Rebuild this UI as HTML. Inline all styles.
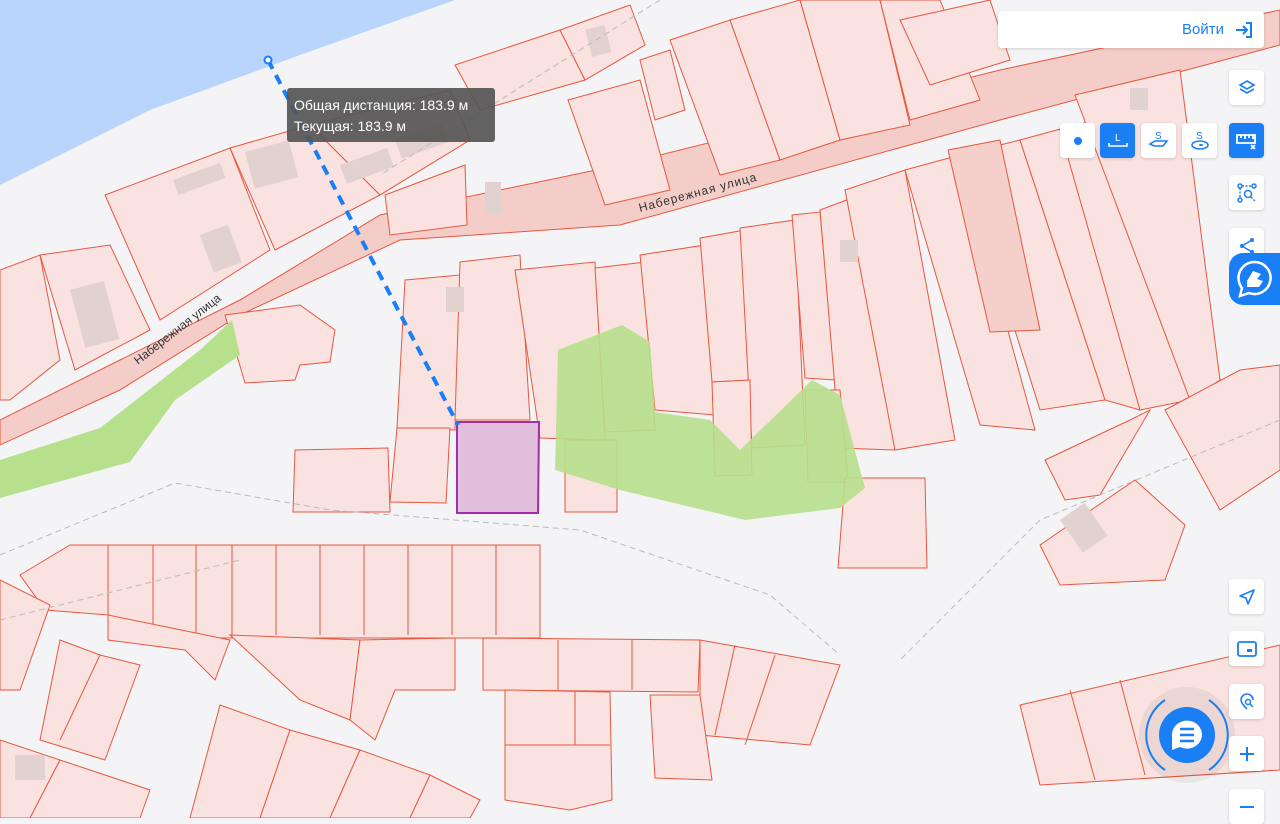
<!DOCTYPE html>
<html><head><meta charset="utf-8"><style>
html,body{margin:0;padding:0;width:1280px;height:818px;overflow:hidden;background:#f4f4f6;font-family:"Liberation Sans",sans-serif}
svg{position:absolute;left:0;top:0}
.b{position:absolute;width:35px;height:35px;background:#fff;border-radius:4px;box-shadow:0 1px 3px rgba(0,0,0,.15);display:flex;align-items:center;justify-content:center}
.bl{background:#1a7ef5}
</style></head><body>
<svg width="1280" height="818" viewBox="0 0 1280 818">
<g fill="#f9e2df" stroke="#e8573f" stroke-width="1">
<!-- water -->
<path d="M0 0H455L300 55L150 110L0 185Z" fill="#b9d5fb" stroke="none"/>
<!-- road band -->
<path d="M0 420L120 360L240 300L380 215L620 165L1000 70L1280 10V45L1000 120L620 225L400 240L240 315L120 390L0 445Z" fill="#f4cdc8"/>
<!-- north side parcels -->
<path d="M105 195L230 148L270 250L160 320Z"/>
<path d="M230 148L310 125L380 195L275 250Z"/>
<path d="M310 125L450 90L470 140L380 195Z"/>
<path d="M0 270L40 255L60 360L10 400L0 400Z"/>
<path d="M40 255L110 245L150 330L75 370Z"/>
<path d="M455 65L560 30L585 80L480 110Z"/>
<path d="M560 30L630 5L645 45L585 80Z"/>
<path d="M568 100L640 80L670 190L605 205Z"/>
<path d="M640 60L670 50L685 110L655 120Z"/>
<path d="M670 40L730 20L780 160L720 175Z"/>
<path d="M730 20L800 0L840 140L780 160Z"/>
<path d="M800 0L880 0L910 125L840 140Z"/>
<path d="M880 0L940 0L980 100L910 120Z"/>
<path d="M900 20L990 0L1010 60L930 85Z"/>
<path d="M385 195L465 165L467 225L390 235Z"/>
<!-- south of road -->
<path d="M225 315L300 305L335 330L330 362L300 365L295 380L245 383Z"/>
<path d="M405 280L460 275L455 430L397 428Z"/>
<path d="M460 262L520 255L530 420L455 420Z"/>
<path d="M515 270L595 262L605 440L540 438Z"/>
<path d="M595 268L645 262L655 430L605 432Z"/>
<path d="M640 255L705 245L715 415L655 410Z"/>
<path d="M700 238L745 230L752 380L712 382Z"/>
<path d="M740 228L795 220L805 445L752 448Z"/>
<path d="M792 215L820 212L835 380L805 378Z"/>
<path d="M820 210L860 195L895 450L840 448Z"/>
<path d="M845 190L905 170L955 440L895 450Z"/>
<path d="M905 170L960 155L1035 430L980 425Z"/>
<path d="M960 155L1020 140L1105 400L1040 410Z"/>
<path d="M1020 140L1075 125L1140 410L1105 400Z"/>
<path d="M1060 130L1130 110L1190 400L1140 410Z"/>
<path d="M1075 95L1180 70L1220 380L1190 400Z"/>
<path d="M948 150L1000 140L1040 330L990 332Z" fill="#f5cfc9"/>
<path d="M1045 460L1130 420L1150 410L1100 495L1065 500Z"/>
<path d="M1165 410L1240 370L1280 365V470L1220 510Z"/>
<path d="M1040 545L1135 480L1185 525L1165 580L1060 585Z"/>
<path d="M712 382L750 380L752 475L715 476Z"/>
<path d="M805 390L840 390L848 482L808 482Z"/>
<path d="M845 478L925 478L927 568L838 568Z"/>
<path d="M565 440L617 440L617 512L565 512Z"/>
<path d="M397 428L450 428L446 503L390 502Z"/>
<path d="M295 450L388 448L390 512L293 512Z"/>
<!-- bottom grid -->
<path d="M20 575L70 545L108 545L108 615L45 610Z"/>
<path d="M108 545H540V638H108Z"/>
<path d="M153 545V635M196 545V635M232 545V635M276 545V635M320 545V635M364 545V635M408 545V635M452 545V635M496 545V635" fill="none"/>
<path d="M0 580L50 605L20 690L0 690Z"/>
<path d="M60 640L100 655L140 665L105 760L40 740Z"/>
<path d="M100 655L60 740" fill="none"/>
<path d="M108 615L230 640L215 680L185 650L108 640Z"/>
<path d="M230 635L360 640L350 720L300 700Z"/>
<path d="M360 640L455 638L455 690L395 690L375 740L350 720Z"/>
<path d="M483 638L700 640L698 692L483 690Z"/>
<path d="M558 640V690M632 640V690" fill="none"/>
<path d="M700 640L840 665L810 745L700 735Z"/>
<path d="M735 645L715 735M775 655L745 745" fill="none"/>
<path d="M505 690L610 692L612 800L570 810L505 800Z"/>
<path d="M505 745H610M575 692V745" fill="none"/>
<path d="M650 695L700 695L712 780L655 778Z"/>
<path d="M220 705L290 730L260 818H190Z"/>
<path d="M290 730L360 750L330 818H260Z"/>
<path d="M360 750L430 775L410 818H330Z"/>
<path d="M430 775L480 800L470 818H410Z"/>
<path d="M0 740L60 760L30 818H0Z"/>
<path d="M60 760L150 790L140 818H30Z"/>
<path d="M1020 705L1280 645V770L1040 785Z"/>
<path d="M1070 690L1095 780M1120 680L1145 775" fill="none"/>
<!-- green -->
<path d="M0 460L100 428L200 350L232 320L240 355L175 400L130 462L0 498Z" fill="#b7e08d" stroke="none"/>
<path d="M558 350L622 325L650 342L655 412L710 420L740 450L812 380L840 395L865 488L840 508L745 520L620 490L555 470Z" fill="#b7e08d" stroke="none" opacity=".9"/>
<!-- buildings -->
<g fill="#e2d2cf" stroke="none">
<rect x="173" y="180" width="50" height="16" transform="rotate(-20 173 180)"/>
<rect x="245" y="152" width="45" height="38" transform="rotate(-15 245 152)"/>
<rect x="200" y="235" width="30" height="40" transform="rotate(-20 200 235)"/>
<rect x="340" y="165" width="50" height="20" transform="rotate(-20 340 165)"/>
<rect x="395" y="140" width="50" height="20" transform="rotate(-20 395 140)"/>
<rect x="70" y="290" width="35" height="60" transform="rotate(-15 70 290)"/>
<rect x="485" y="182" width="16" height="32"/>
<rect x="446" y="287" width="18" height="25"/>
<rect x="585" y="30" width="20" height="28" transform="rotate(-15 585 30)"/>
<rect x="1130" y="88" width="18" height="22"/>
<rect x="1060" y="520" width="30" height="40" transform="rotate(-35 1060 520)"/>
<rect x="15" y="755" width="30" height="25"/>
<rect x="840" y="240" width="18" height="22"/>
</g>
<!-- dashed boundaries -->
<path d="M0 555L175 483L330 510L580 530L770 595L840 655M660 0L380 175M1280 420L1040 520L900 660M0 620L240 560" fill="none" stroke="#bbb" stroke-dasharray="6 4"/>
</g>
<!-- purple parcel -->
<path d="M457 422L539 422L538 513L457 513Z" fill="#e2bfdc" stroke="#a22dad" stroke-width="2"/>
<!-- measure line -->
<line x1="268" y1="60" x2="458" y2="425" stroke="#1a7ef5" stroke-width="4" stroke-dasharray="10 7"/>
<circle cx="268" cy="60" r="3.5" fill="#fff" stroke="#1a7ef5" stroke-width="2"/>
<text x="640" y="212" font-size="12" fill="#333" transform="rotate(-15 640 212)" letter-spacing="1">Набережная  улица</text>
<text x="138" y="365" font-size="12" fill="#333" transform="rotate(-38 138 365)">Набережная  улица</text>
<!-- tooltip -->
<rect x="287" y="88" width="208" height="54" rx="3" fill="#555" opacity=".92"/>
<text x="294" y="110" font-size="14" fill="#fff">Общая дистанция: 183.9 м</text>
<text x="294" y="131" font-size="14" fill="#fff">Текущая: 183.9 м</text>
<!-- chat -->
<circle cx="1187" cy="735" r="48" fill="#000" opacity=".05"/>
<path d="M1165 700A42 42 0 0 0 1165 770M1209 700A42 42 0 0 1 1209 770" fill="none" stroke="#1a7ef5" stroke-width="2"/>
<circle cx="1187" cy="735" r="28" fill="#1a7ef5"/>
<path d="M1172 735a15 14 0 1 1 8 12l-8 3z" fill="#fff"/>
<path d="M1180 729h14M1180 735h14M1180 741h14" stroke="#1a7ef5" stroke-width="2.5"/>
</svg>
<div class="b" style="left:998px;top:11px;width:266px;height:37px;justify-content:flex-end;padding-right:0">
<span style="color:#1a7ef5;font-size:15px;margin-right:10px">Войти</span>
<svg style="position:static;margin-right:10px" width="20" height="20" viewBox="0 0 20 20"><path d="M2 10h11M9 6l4 4-4 4M12 3h5v14h-5" fill="none" stroke="#1a7ef5" stroke-width="2"/></svg></div>
<div class="b" style="left:1229px;top:70px"><svg style="position:static" width="18" height="18" viewBox="0 0 18 18"><path d="M9 2l7 4-7 4-7-4zM2 10l7 4 7-4" fill="none" stroke="#1a7ef5" stroke-width="1.6"/></svg></div>
<div class="b" style="left:1060px;top:123px"><div style="width:8px;height:8px;border-radius:50%;background:#1a7ef5"></div></div>
<div class="b bl" style="left:1100px;top:123px"><svg style="position:static" width="22" height="20" viewBox="0 0 22 20"><text x="8" y="10" font-size="10" fill="#fff" font-family="Liberation Sans">L</text><path d="M2 12v3h18v-3" fill="none" stroke="#fff" stroke-width="1.6"/></svg></div>
<div class="b" style="left:1141px;top:123px"><svg style="position:static" width="24" height="24" viewBox="0 0 24 24"><text x="8" y="10" font-size="10" fill="#1a7ef5" font-family="Liberation Sans">S</text><path d="M3 15l5-3h12l-4 5H7z" fill="none" stroke="#1a7ef5" stroke-width="1.6"/></svg></div>
<div class="b" style="left:1182px;top:123px"><svg style="position:static" width="24" height="24" viewBox="0 0 24 24"><text x="8" y="10" font-size="10" fill="#1a7ef5" font-family="Liberation Sans">S</text><ellipse cx="12" cy="16" rx="8" ry="4" fill="none" stroke="#1a7ef5" stroke-width="1.6"/><ellipse cx="13" cy="16" rx="2" ry="1" fill="#1a7ef5"/></svg></div>
<div class="b bl" style="left:1229px;top:123px"><svg style="position:static" width="24" height="22" viewBox="0 0 24 22"><path d="M2 5h18v8H2zM6 5v3M10 5v4M14 5v3M18 5v4M16 15l4 4M20 15l-4 4" fill="none" stroke="#fff" stroke-width="1.8"/></svg></div>
<div class="b" style="left:1229px;top:175px"><svg style="position:static" width="20" height="20" viewBox="0 0 20 20"><circle cx="3" cy="3" r="2" fill="none" stroke="#1a7ef5" stroke-width="1.5"/><circle cx="17" cy="3" r="2" fill="none" stroke="#1a7ef5" stroke-width="1.5"/><circle cx="3" cy="17" r="2" fill="none" stroke="#1a7ef5" stroke-width="1.5"/><circle cx="11" cy="11" r="3.5" fill="none" stroke="#1a7ef5" stroke-width="1.5"/><path d="M14 14l4 4M5 3h10M3 5v10" stroke="#1a7ef5" stroke-width="1.5" stroke-dasharray="2 1.5"/></svg></div>
<div class="b" style="left:1229px;top:228px"><svg style="position:static" width="18" height="18" viewBox="0 0 18 18"><circle cx="4" cy="9" r="2" fill="#1a7ef5"/><circle cx="14" cy="3" r="2" fill="#1a7ef5"/><circle cx="14" cy="15" r="2" fill="#1a7ef5"/><path d="M4 9l10-6M4 9l10 6" stroke="#1a7ef5" stroke-width="1.5"/></svg></div>
<div style="position:absolute;left:1229px;top:253px;width:60px;height:52px;border-radius:14px 0 0 14px;background:#1a7ef5;display:flex;align-items:center;padding-left:6px;box-sizing:border-box"><svg width="40" height="40" viewBox="0 0 40 40" style="position:static"><path d="M20 3a16 16 0 1 1-6 31l-9 3 2-8A16 16 0 0 1 20 3z" fill="none" stroke="#fff" stroke-width="2.5"/><path d="M12 22l6-10 8 3-4 5 6 2-4 6H12z" fill="#fff"/></svg></div>
<div class="b" style="left:1229px;top:579px"><svg style="position:static" width="18" height="18" viewBox="0 0 18 18"><path d="M16 2L2 8l6 2 2 6z" fill="none" stroke="#1a7ef5" stroke-width="1.6" stroke-linejoin="round"/></svg></div>
<div class="b" style="left:1229px;top:631px"><svg style="position:static" width="20" height="16" viewBox="0 0 20 16"><rect x="1" y="1" width="18" height="14" rx="2" fill="none" stroke="#1a7ef5" stroke-width="1.8"/><rect x="10" y="8" width="5" height="3" fill="#1a7ef5"/></svg></div>
<div class="b" style="left:1229px;top:684px"><svg style="position:static" width="18" height="18" viewBox="0 0 18 18"><path d="M9 16C5 12 3 9 3 7a6 6 0 0 1 12 0" fill="none" stroke="#1a7ef5" stroke-width="1.6"/><circle cx="10" cy="9" r="2.5" fill="none" stroke="#1a7ef5" stroke-width="1.5"/><path d="M12 11l3 3" stroke="#1a7ef5" stroke-width="1.5"/></svg></div>
<div class="b" style="left:1229px;top:736px"><svg style="position:static" width="16" height="16" viewBox="0 0 16 16"><path d="M8 1v14M1 8h14" stroke="#1a7ef5" stroke-width="2"/></svg></div>
<div class="b" style="left:1229px;top:789px"><svg style="position:static" width="16" height="16" viewBox="0 0 16 16"><path d="M1 8h14" stroke="#1a7ef5" stroke-width="2"/></svg></div>
</body></html>
